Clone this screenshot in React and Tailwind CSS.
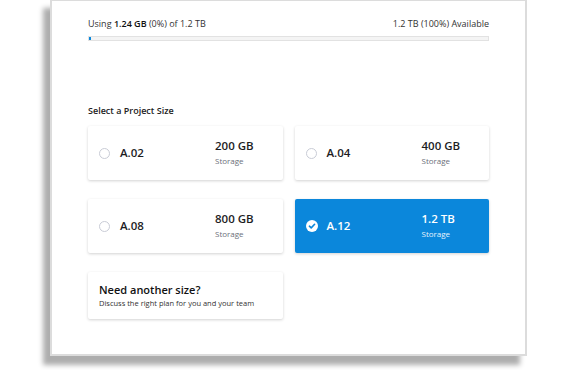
import React, { useState } from "react";

const sizes = [
  { id: "A.02", amount: "200 GB" },
  { id: "A.04", amount: "400 GB" },
  { id: "A.08", amount: "800 GB" },
  { id: "A.12", amount: "1.2 TB" },
];

function Radio({ checked }) {
  if (checked) {
    return (
      <svg width="12" height="12" viewBox="0 0 12 12">
        <circle cx="6" cy="6" r="6" fill="#ffffff" />
        <path d="M3.4 6.2 L5.2 7.9 L8.6 4.3" fill="none" stroke="#0b87db" strokeWidth="1.6" strokeLinecap="round" strokeLinejoin="round" />
      </svg>
    );
  }
  return <span className="block w-[11px] h-[11px] rounded-full border border-[#c9ccd6] bg-white" />;
}

function SizeCard({ item, selected, onSelect }) {
  return (
    <button
      type="button"
      onClick={() => onSelect(item.id)}
      className={
        selected
          ? "h-[54px] flex items-center pl-[11px] rounded-[2px] bg-[#0b87db] text-white text-left shadow-[0_1px_3px_rgba(0,0,0,0.18)]"
          : "h-[54px] flex items-center pl-[11px] rounded-[2px] bg-white text-[#1d1d1f] text-left shadow-[0_1px_3px_rgba(0,0,0,0.18)]"
      }
    >
      <div className="w-[21px]">
        <Radio checked={selected} />
      </div>
      <div className="w-[95px] text-[11.5px] font-semibold">{item.id}</div>
      <div className="flex flex-col">
        <span className="text-[11.5px] font-semibold leading-[16px]">{item.amount}</span>
        <span className={selected ? "text-[8px] leading-[14px] text-[#e6f2fb]" : "text-[8px] leading-[14px] text-[#6b6f7a]"}>
          Storage
        </span>
      </div>
    </button>
  );
}

export default function App() {
  const [selected, setSelected] = useState("A.12");

  return (
    <div className="w-[570px] h-[370px] bg-white overflow-hidden" style={{ fontFamily: '"Open Sans", "Noto Sans", sans-serif' }}>
      <div className="ml-[50px] w-[477px] h-[357px] -mt-px bg-white border-2 border-[#dcdcdc] shadow-[-7px_9px_5px_rgba(0,0,0,0.32)]">
        <div className="px-[36px] pt-[16px]">
          {/* Usage */}
          <div className="flex justify-between text-[9px] text-[#333] leading-[14px]">
            <span>
              Using <span className="font-semibold text-[#111]">1.24 GB</span> (0%) of 1.2 TB
            </span>
            <span>1.2 TB (100%) Available</span>
          </div>
          <div className="mt-[5px] h-[5px] border border-[#e2e2e2] bg-[#f4f4f4] flex">
            <div className="w-[2px] bg-[#0b87db]" />
          </div>

          {/* Project size */}
          <div className="mt-[63px] text-[9px] font-semibold text-[#222] leading-[14px]">Select a Project Size</div>

          <div className="mt-[8px] grid grid-cols-2 gap-x-[12px] gap-y-[19px]">
            {sizes.map(item => (
              <SizeCard key={item.id} item={item} selected={selected === item.id} onSelect={setSelected} />
            ))}
            <div className="h-[47px] flex flex-col justify-center pl-[11px] rounded-[2px] bg-white shadow-[0_1px_3px_rgba(0,0,0,0.18)]">
              <span className="text-[11px] font-semibold text-[#111] leading-[15px]">Need another size?</span>
              <span className="text-[7.5px] text-[#333] leading-[13px]">Discuss the right plan for you and your team</span>
            </div>
          </div>
        </div>
      </div>
    </div>
  );
}
